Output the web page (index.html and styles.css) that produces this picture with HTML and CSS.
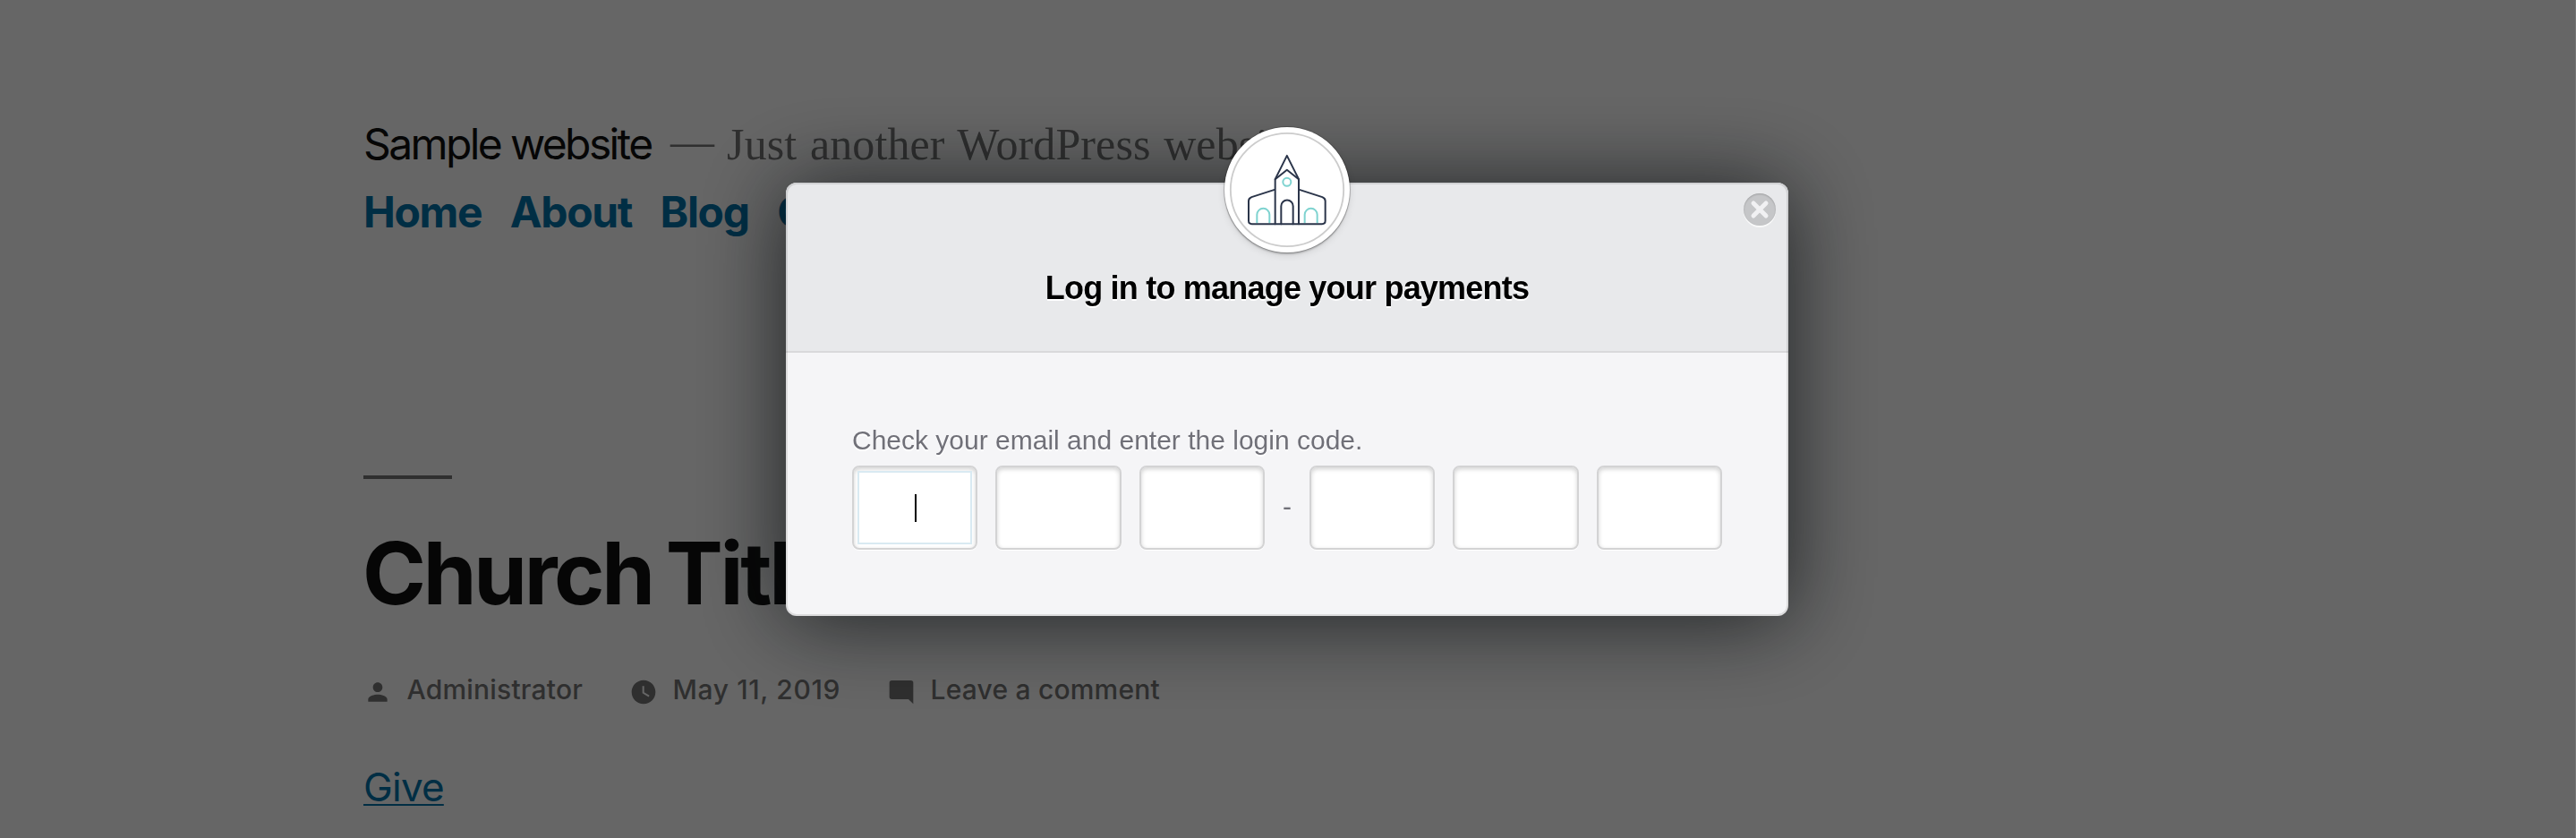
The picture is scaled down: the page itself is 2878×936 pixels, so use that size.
FILE: index.html
```html
<!DOCTYPE html>
<html lang="en">
<head>
<meta charset="utf-8">
<title>Sample website</title>
<link rel="stylesheet" href="styles.css">
</head>
<body>
<div class="site">
  <header class="branding">
    <p class="identity"><span class="site-title">Sample website</span><span class="separator">—</span><span class="tagline">Just another WordPress website</span></p>
    <nav class="menu">
      <a href="#">Home</a>
      <a href="#">About</a>
      <a href="#">Blog</a>
      <a href="#">Contact</a>
    </nav>
  </header>
  <article class="entry">
    <div class="rule"></div>
    <h1 class="entry-title">Church Title</h1>
    <div class="meta">
      <span class="meta-item author">
        <svg viewBox="0 0 24 24"><path d="M12 12c2.2 0 4-1.8 4-4s-1.800-4-4-4-4 1.800-4 4 1.800 4 4 4zm0 2c-2.700 0-8 1.300-8 4v2h16v-2c0-2.700-5.300-4-8-4z"/></svg>
        Administrator
      </span>
      <span class="meta-item date">
        <svg viewBox="0 0 24 24"><path d="M12 2C6.500 2 2 6.500 2 12s4.500 10 10 10 10-4.500 10-10S17.500 2 12 2zm4.200 14.200L11 13V7h1.500v5.200l4.500 2.700-.8 1.300z"/></svg>
        May 11, 2019
      </span>
      <span class="meta-item comments">
        <svg viewBox="0 0 24 24"><path d="M4 2.200h16a2 2 0 0 1 2 2V22l-4-4H4a2 2 0 0 1-2-2V4.200a2 2 0 0 1 2-2z"/></svg>
        Leave a comment
      </span>
    </div>
    <p class="content"><a href="#">Give</a></p>
  </article>
</div>

<div class="overlay">
  <div class="modal">
    <div class="logo">
      <svg viewBox="84 66.500 420 420" fill="none" stroke-linejoin="round" stroke-linecap="round">
        <circle cx="294" cy="276.500" r="189.500" stroke="#ccc" stroke-width="5.500"/>
        <g stroke="#7fd3d0" stroke-width="6" stroke-linecap="butt">
          <circle cx="293.500" cy="250.500" r="13.500"/>
          <path d="M193 388v-28a21 21 0 0 1 42 0v28M353 388v-28a21 21 0 0 1 42 0v28"/>
        </g>
        <g stroke="#2b354a" stroke-width="6">
          <path d="M254 391V241l39.500-31 39.500 31v150"/>
          <path d="M254 241l39.500-79 39.500 79"/>
          <path d="M252 276l-77 25q-10 4-10 13v66q0 11 11 11h235q11 0 11-11v-66q0-9-10-13l-77-25"/>
          <path d="M274 391v-60a20 20 0 0 1 40 0v60"/>
        </g>
      </svg>
    </div>
    <button class="close" aria-label="Close">
      <svg viewBox="0 0 36 36"><path d="M11 11l14 14M25 11L11 25"/></svg>
    </button>
    <div class="modal-header"><h2>Log in to manage your payments</h2></div>
    <div class="modal-body">
      <p class="label">Check your email and enter the login code.</p>
      <div class="code">
        <div class="group"><div class="digit focused"><div class="inner"><span class="caret"></span></div></div><div class="digit"></div><div class="digit"></div></div>
        <span class="dash">-</span>
        <div class="group"><div class="digit"></div><div class="digit"></div><div class="digit"></div></div>
      </div>
    </div>
  </div>
</div>
</body>
</html>
```
FILE: styles.css
```css
* { box-sizing: border-box; }
html, body { height: 100%; }
body {
  margin: 0;
  overflow: hidden;
  background: #fff;
  color: #111;
  font-family: Inter, "Liberation Sans", sans-serif;
}
p, h1, h2 { margin: 0; }
a { color: #0073aa; text-decoration: none; }

.site { padding: 132px 406px 0; }
.identity { height: 58px; line-height: 58px; white-space: nowrap; }
.site-title { font-size: 48px; letter-spacing: -2.62px; }
.separator, .tagline { font-family: "Liberation Serif", serif; color: #767676; }
.separator { margin: 0 14px 0 21.5px; font-size: 49px; line-height: 1; vertical-align: 4px; }
.tagline { font-size: 50px; letter-spacing: 0.1px; word-spacing: 2px; }
.menu {
  display: flex;
  gap: 31.5px;
  margin-top: 18px;
  font-size: 48px;
  font-weight: 700;
  line-height: 58px;
  letter-spacing: -1.35px;
}

.rule { width: 99px; height: 4px; margin-top: 265px; background: #767676; }
.entry-title {
  margin: 50px 0 0 -1px;
  font-size: 96px;
  line-height: 110px;
  letter-spacing: -3.3px;
  word-spacing: -4.5px;
}
.meta {
  display: flex;
  gap: 52px;
  margin-top: 55px;
  color: #767676;
  font-size: 30px;
  font-weight: 500;
  line-height: 40px;
  letter-spacing: 0.2px;
}
.meta-item { display: flex; align-items: center; gap: 16.5px; }
.meta-item svg { width: 32px; height: 32px; margin-top: 6px; fill: currentColor; }
.date { letter-spacing: 0.62px; }
.content { margin-top: 59px; font-size: 44px; line-height: 60px; letter-spacing: -0.8px; }
.content a { text-decoration: underline; text-decoration-thickness: 2px; text-underline-offset: 3px; text-decoration-skip-ink: none; }

.overlay {
  position: fixed;
  inset: 0;
  display: flex;
  justify-content: center;
  align-items: flex-start;
  padding: 204px 1px 0 0;
  border-right: 1px solid rgba(255, 255, 255, 0.1);
  background: rgba(0, 0, 0, 0.6);
  font-family: "Liberation Sans", sans-serif;
}
.modal {
  position: relative;
  width: 1120px;
  height: 484px;
  border-radius: 12px;
  background: #f5f5f7;
  box-shadow: 0 4px 96px rgba(8, 12, 14, 0.76);
}
.modal::after {
  content: "";
  position: absolute;
  inset: 0;
  border: 2px solid rgba(0, 0, 0, 0.1);
  border-radius: 12px;
  pointer-events: none;
}
.modal-header {
  height: 190px;
  padding-top: 98px;
  border-bottom: 2px solid #d9d9db;
  border-radius: 12px 12px 0 0;
  background: #e8e9eb;
  text-align: center;
}
.modal-header h2 {
  color: #000;
  font-size: 36px;
  line-height: 40px;
  letter-spacing: -0.79px;
  text-shadow: 0 2px 0 #fff;
}
.modal-body { padding: 80px 74px 0; }
.label { color: #707078; font-size: 30px; line-height: 36px; text-shadow: 0 2px 0 #fff; }
.code { display: flex; margin-top: 10px; height: 94px; }
.group { display: flex; flex: 1; gap: 20px; }
.digit {
  flex: 1;
  padding: 4px;
  border: 2px solid #d3d3d4;
  border-radius: 8px;
  background: #fff;
  box-shadow: inset 0 2px 5px rgba(0, 0, 0, 0.18), 0 1px 0 #fff;
}
.inner {
  display: flex;
  align-items: center;
  justify-content: center;
  height: 82px;
  border: 2px solid #d9eaf2;
  background: #fff;
}
.caret { width: 2px; height: 31px; margin-left: 2px; background: #000; }
.dash {
  width: 50px;
  padding-bottom: 4px;
  color: #707078;
  font-size: 30px;
  line-height: 92px;
  text-align: center;
}
.logo {
  position: absolute;
  z-index: 1;
  top: -62px;
  left: 490px;
  width: 140px;
  height: 140px;
  border-radius: 50%;
  background: #fff;
  box-shadow: 0 0 0 1px rgba(0, 0, 0, 0.18), 0 2px 2px rgba(0, 0, 0, 0.22), 0 3px 8px rgba(0, 0, 0, 0.1);
}
.logo svg { display: block; width: 140px; height: 140px; }
.close {
  position: absolute;
  top: 12px;
  right: 14px;
  width: 36px;
  height: 36px;
  padding: 0;
  border: 0;
  border-radius: 50%;
  background: #c5c6c8;
  box-shadow: inset 0 1px 2px rgba(0, 0, 0, 0.2), 0 2px 0 rgba(255, 255, 255, 0.7);
}
.close svg { display: block; width: 36px; height: 36px; stroke: #f1f1f3; stroke-width: 5; stroke-linecap: round; }
```
